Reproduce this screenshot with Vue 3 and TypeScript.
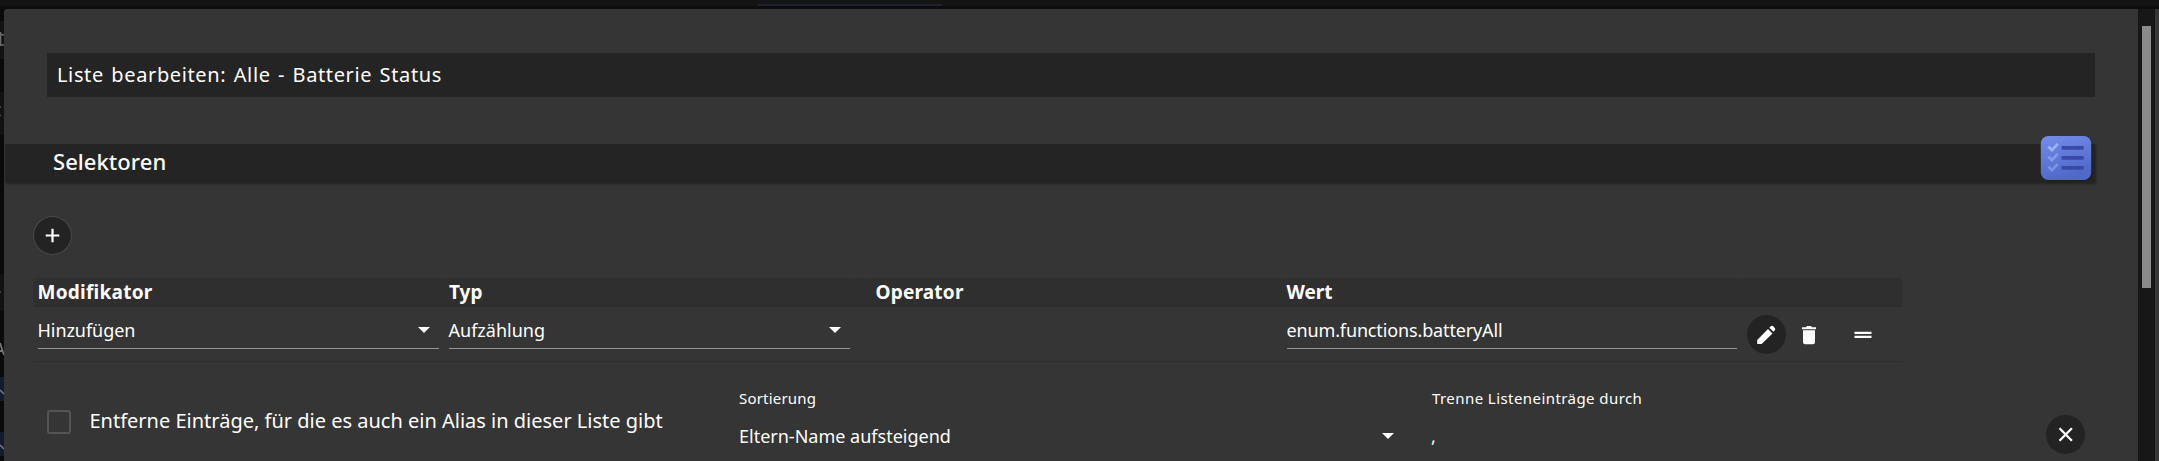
<script setup lang="ts">
import { ref } from 'vue'

interface Column {
  key: string
  label: string
}

const columns: Column[] = [
  { key: 'modifier', label: 'Modifikator' },
  { key: 'type', label: 'Typ' },
  { key: 'gap', label: '' },
  { key: 'operator', label: 'Operator' },
  { key: 'value', label: 'Wert' },
  { key: 'actions', label: '' },
]

const modifier = ref('Hinzufügen')
const kind = ref('Aufzählung')
const value = ref('enum.functions.batteryAll')
const removeAliases = ref(false)
</script>

<template>
  <div class="screen">
    <div class="top-edge"><div class="top-tab"></div></div>
    <div class="body">
      <svg class="left-edge" width="4" height="452" viewBox="0 9 4 452">
        <rect y="9" width="4" height="452" fill="#0a0a0a" />
        <rect y="21" width="4" height="38" fill="#131313" />
        <rect y="92" width="4" height="43" fill="#121212" />
        <rect y="274" width="4" height="37" fill="#121212" />
        <path d="M0 34.700h4M0 45h4M.5 32v14" stroke="#6b6b6b" stroke-width="1.600" fill="none" />
        <path d="M0 107h1M0 115.500h1M0 292h1" stroke="#555" stroke-width="1.500" />
        <path d="M0 343l4 12M0 351h2.500" stroke="#777" stroke-width="1.800" fill="none" />
        <rect y="377" width="4" height="24" fill="#131b2e" />
        <rect y="432" width="4" height="24" fill="#131b2e" />
        <path d="M0 390l4 4M0 445l4 4" stroke="#77798a" stroke-width="1.500" />
      </svg>

      <main class="dialog">
        <header class="title"><span class="t-title">Liste bearbeiten: Alle - Batterie Status</span></header>

        <section class="section">
          <span class="t-section">Selektoren</span>
          <svg class="list-icon" width="52" height="46" viewBox="0 0 52 46">
            <defs>
              <linearGradient id="tile" x1="0" y1="0" x2="0.300" y2="1">
                <stop offset="0" stop-color="#738de9" />
                <stop offset="1" stop-color="#5068c8" />
              </linearGradient>
            </defs>
            <rect x="0.800" y="1" width="50.400" height="44" rx="7.500" fill="url(#tile)" />
            <g fill="none" stroke-width="2.800">
              <path d="M8.300 11.500l3.700 3.600 5.800-6.200" stroke="#9db3f2" />
              <path d="M8.300 21.500l3.700 3.600 5.800-6.200" stroke="#849ce8" />
              <path d="M8.300 31.500l3.700 3.600 5.800-6.200" stroke="#7b93e2" />
            </g>
            <g fill="#3a49a8">
              <rect x="21.500" y="11" width="22.300" height="3.700" rx="1" />
              <rect x="21.500" y="21" width="22.300" height="3.700" rx="1" />
              <rect x="21.500" y="31" width="22.300" height="3.700" rx="1" />
            </g>
          </svg>
        </section>

        <button class="round add" type="button" aria-label="Hinzufügen">
          <svg width="39" height="39" viewBox="0 0 39 39"><path d="M12.700 19.500h13.600M19.500 12.700v13.600" stroke="#fff" stroke-width="2.200" /></svg>
        </button>

        <div class="table">
          <div class="grid head">
            <div v-for="c in columns" :key="c.key" class="th"><span :class="'h-' + c.key">{{ c.label }}</span></div>
          </div>
          <div class="grid row">
            <div class="cell"><div class="field"><span class="t-modifier">{{ modifier }}</span><i class="caret"></i></div></div>
            <div class="cell"><div class="field"><span class="t-kind">{{ kind }}</span><i class="caret"></i></div></div>
            <div></div>
            <div></div>
            <div class="cell"><div class="field"><span class="t-value">{{ value }}</span></div></div>
            <div class="actions">
              <button class="round" type="button" aria-label="Bearbeiten">
                <svg width="39" height="39" viewBox="0 0 39 39">
                  <path d="M10.200 25l10.800-11 4.500 4.400L14.600 29h-4.400zM22.300 12.700l1.400-1.400q1.300-1 2.500 0l1.600 1.700q1 1.200 0 2.300l-1.300 1.400z" fill="#fff" />
                </svg>
              </button>
              <svg class="trash" width="16" height="20" viewBox="0 0 16 20">
                <path d="M1 2.300h4l1-1.300h4l1 1.300h4v2H1zM2 5.200h12V17q0 2.200-2.200 2.200H4.200Q2 19.200 2 17z" fill="#fff" />
              </svg>
              <svg class="handle" width="18" height="8" viewBox="0 0 18 8">
                <path d="M.5 1.800h17M.5 5.900h17" stroke="#fff" stroke-width="2.300" />
              </svg>
            </div>
          </div>
        </div>

        <div class="options">
          <label class="check" @click="removeAliases = !removeAliases">
            <span class="box" :class="{ on: removeAliases }"></span>
            <span class="t-check">Entferne Einträge, für die es auch ein Alias in dieser Liste gibt</span>
          </label>
          <div class="option sort">
            <span class="t-small t-sort">Sortierung</span>
            <div class="option-value"><span class="t-order">Eltern-Name aufsteigend</span><i class="caret"></i></div>
          </div>
          <div class="option">
            <span class="t-small t-sep">Trenne Listeneinträge durch</span>
            <div class="option-value"><span class="t-comma">,</span></div>
          </div>
        </div>

        <button class="round close" type="button" aria-label="Schließen">
          <svg width="39" height="39" viewBox="0 0 39 39"><path d="M13.500 13.300l12.400 12.400M25.900 13.300L13.500 25.700" stroke="#fff" stroke-width="2.300" /></svg>
        </button>
      </main>

      <div class="scroll"><div class="thumb"></div></div>
    </div>
  </div>
</template>

<style>
body {
  background: #353535;
  overflow: hidden;
}
</style>

<style scoped>
.screen {
  width: 2159px;
  height: 461px;
  overflow: hidden;
  background: #353535;
  color: #fff;
  font-family: 'Noto Sans', 'Open Sans', sans-serif;
}
.screen * {
  box-sizing: border-box;
}
.screen span {
  white-space: nowrap;
}
.top-edge {
  height: 9px;
  background: #141414;
  border-bottom: 3px solid #0d0d0d;
  padding: 4px 0 0 758px;
}
.top-tab {
  width: 184px;
  height: 2px;
  background: #1f222d;
}
.body {
  display: flex;
  height: 452px;
  background: linear-gradient(90deg, #0a0a0a 10px, #353535 10px);
}
.left-edge {
  display: block;
  flex: none;
}
.dialog {
  position: relative;
  width: 2134px;
  background: #353535;
  border-top-left-radius: 3px;
  padding-top: 44px;
}
.title {
  width: 2048px;
  height: 44px;
  margin-left: 43px;
  padding-left: 10px;
  background: #242424;
  line-height: 43px;
}
.section {
  display: flex;
  justify-content: space-between;
  width: 2090px;
  height: 39px;
  margin: 47px 0 0 1px;
  padding: 0 3px 0 48px;
  background: #242424;
  box-shadow: 1px 1px 2px rgba(0, 0, 0, 0.35);
  line-height: 34px;
}
.list-icon {
  margin-top: -9px;
  filter: drop-shadow(1px 1px 1px rgba(0, 0, 0, 0.2));
}
.round {
  display: block;
  width: 39px;
  height: 39px;
  padding: 0;
  border: 0;
  border-radius: 50%;
  background: #232323;
}
.round svg {
  display: block;
}
.add {
  margin: 33px 0 0 29px;
  box-shadow: inset 0 0 0 1px #4b4b4b;
}
.table {
  width: 1869px;
  margin: 23px 0 0 29px;
}
.grid {
  display: grid;
  grid-template-columns: 410px 412px 16px 411px 460px 160px;
}
.head {
  height: 29px;
  border-bottom: 1px solid #2b2b2b;
  font-size: 19px;
  font-weight: 700;
  line-height: 28px;
}
.th {
  padding-left: 4.500px;
  background: #2f2f2f;
  border-radius: 2px;
}
.h-modifier {
  letter-spacing: 0.25px;
}
.h-operator {
  letter-spacing: 0.2px;
}
.row {
  height: 55px;
  border-bottom: 1px solid #2e2e2e;
}
.cell {
  padding: 7px 5px 0;
}
.cell:first-child {
  padding-right: 4px;
}
.grid > :nth-child(2) {
  padding-left: 6px;
}
.field {
  display: flex;
  justify-content: space-between;
  height: 35px;
  border-bottom: 1px solid #949494;
  font-size: 18px;
  line-height: 32px;
}
.field span {
  margin-left: -0.500px;
}
.t-modifier {
  letter-spacing: -0.05px;
}
.t-kind {
  letter-spacing: 0;
}
.t-value {
  letter-spacing: -0.14px;
}
.caret {
  width: 12px;
  height: 6px;
  margin: 13px 9px 0 0;
  background: #fff;
  clip-path: polygon(0 0, 100% 0, 50% 100%);
}
.actions {
  display: flex;
  padding: 8px 0 0 5px;
}
.trash {
  margin: 10px 0 0 15px;
}
.handle {
  margin: 15.500px 0 0 36.500px;
}
.options {
  display: flex;
  margin-left: 43px;
}
.check {
  display: flex;
  width: 692px;
  padding-top: 48px;
}
.box {
  width: 24px;
  height: 24px;
  border: 2px solid #545454;
  border-radius: 3px;
}
.box.on {
  background: #738de9;
}
.t-check {
  margin: -3px 0 0 18.500px;
  font-size: 20px;
  line-height: 28px;
}
.option {
  padding-top: 26px;
  line-height: 20px;
}
.sort {
  width: 693px;
}
.option-value {
  display: flex;
  justify-content: space-between;
  padding-right: 35px;
  font-size: 18px;
  line-height: 34px;
  margin-top: 11px;
}
.sort .caret {
  margin: 14px 3px 0 0;
}
.t-small {
  display: block;
  font-size: 15px;
}
.t-sort {
  letter-spacing: 0.2px;
}
.t-sep {
  letter-spacing: 0.43px;
}
.t-comma {
  margin-left: -1px;
}
.t-title {
  font-size: 20px;
  letter-spacing: 0.63px;
  word-spacing: 1.600px;
}
.t-section {
  font-size: 22px;
  font-weight: 500;
  letter-spacing: 0.05px;
}
.close {
  position: absolute;
  left: 2042px;
  top: 406px;
}
.scroll {
  width: 17px;
  padding: 17px 4px 0;
  background: #171717;
}
.thumb {
  height: 262px;
  background: #8b8b8b;
}
</style>
